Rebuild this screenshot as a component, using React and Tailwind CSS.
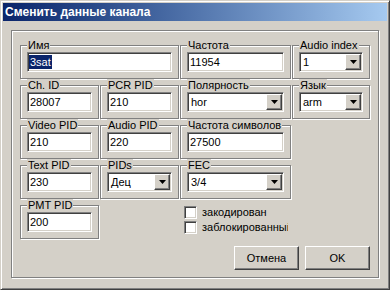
import React from 'react';

const sunken = "border border-t-[#808080] border-l-[#808080] border-r-white border-b-white shadow-[inset_1px_1px_0_#404040,inset_-1px_-1px_0_#d4d0c8]";
const raised = "border border-t-white border-l-white border-r-[#404040] border-b-[#404040] shadow-[inset_-1px_-1px_0_#808080] bg-[#d4d0c8]";

function Group({ label, className, children }) {
  return (
    <div className={`relative h-[34px] border border-[#808080] shadow-[inset_1px_1px_0_#fff,1px_1px_0_#fff] px-[6px] pt-[6px] ${className}`}>
      <span className="absolute -top-[7px] left-[6px] bg-[#d4d0c8] px-px leading-[13px] whitespace-nowrap">{label}</span>
      {children}
    </div>
  );
}

function Field({ value, selected }) {
  return (
    <div className={`h-[20px] w-full bg-white ${sunken} flex items-center pl-px leading-[14px]`}>
      {selected ? <span className="bg-[#0a246a] text-white px-px">{value}</span> : <span className="pl-px">{value}</span>}
    </div>
  );
}

function Combo({ value }) {
  return (
    <div className={`h-[20px] w-full bg-white ${sunken} flex items-center p-px`}>
      <span className="flex-1 pl-[2px] leading-[14px]">{value}</span>
      <div className={`w-[16px] h-[16px] ${raised} flex items-center justify-center`}>
        <svg width="7" height="4" viewBox="0 0 7 4">
          <polygon points="0,0 7,0 3.5,4" fill="#000" />
        </svg>
      </div>
    </div>
  );
}

function Check({ label }) {
  return (
    <div className="flex items-center gap-[5px] h-[13px]">
      <div className={`w-[13px] h-[13px] bg-white ${sunken}`} />
      <span className="w-[86px] overflow-hidden whitespace-nowrap leading-[13px]">{label}</span>
    </div>
  );
}

export default function App() {
  return (
    <div className={`w-[390px] h-[290px] bg-[#d4d0c8] font-['Liberation_Sans',Arial,sans-serif] text-[11px] text-black border border-t-[#d4d0c8] border-l-[#d4d0c8] border-r-[#404040] border-b-[#404040] shadow-[inset_1px_1px_0_#fff,inset_-1px_-1px_0_#808080] p-[2px] flex flex-col`}>
      <div className="h-[18px] bg-gradient-to-r from-[#0a246a] to-[#a6caf0] flex items-center pl-[2px]">
        <span className="text-white font-bold text-[12px] leading-[14px]">Сменить данные канала</span>
      </div>

      <div className="mt-[9px] mx-[8px] border border-[#808080] shadow-[inset_1px_1px_0_#fff,1px_1px_0_#fff] pt-[14px] px-[8px] pb-[7px] flex flex-col gap-[6px]">
        <div className="flex gap-px">
          <Group label="Имя" className="w-[159px]"><Field value="3sat" selected /></Group>
          <Group label="Частота" className="w-[111px]"><Field value="11954" /></Group>
          <Group label="Audio index" className="w-[78px]"><Combo value="1" /></Group>
        </div>
        <div className="flex gap-px">
          <Group label="Ch. ID" className="w-[79px]"><Field value="28007" /></Group>
          <Group label="PCR PID" className="w-[79px]"><Field value="210" /></Group>
          <Group label="Полярность" className="w-[111px]"><Combo value="hor" /></Group>
          <Group label="Язык" className="w-[78px]"><Combo value="arm" /></Group>
        </div>
        <div className="flex gap-px">
          <Group label="Video PID" className="w-[79px]"><Field value="210" /></Group>
          <Group label="Audio PID" className="w-[79px]"><Field value="220" /></Group>
          <Group label="Частота символов" className="w-[111px]"><Field value="27500" /></Group>
        </div>
        <div className="flex gap-px">
          <Group label="Text PID" className="w-[79px]"><Field value="230" /></Group>
          <Group label="PIDs" className="w-[79px]"><Combo value="Дец" /></Group>
          <Group label="FEC" className="w-[111px]"><Combo value="3/4" /></Group>
        </div>
        <div className="flex">
          <Group label="PMT PID" className="w-[79px]"><Field value="200" /></Group>
          <div className="ml-[85px] pt-px flex flex-col gap-[2px]">
            <Check label="закодирован" />
            <Check label="заблокированный" />
          </div>
        </div>
        <div className="flex justify-end gap-[6px] mt-px">
          <button className={`w-[65px] h-[24px] ${raised} leading-[14px]`}>Отмена</button>
          <button className={`w-[65px] h-[24px] ${raised} leading-[14px]`}>OK</button>
        </div>
      </div>
    </div>
  );
}
